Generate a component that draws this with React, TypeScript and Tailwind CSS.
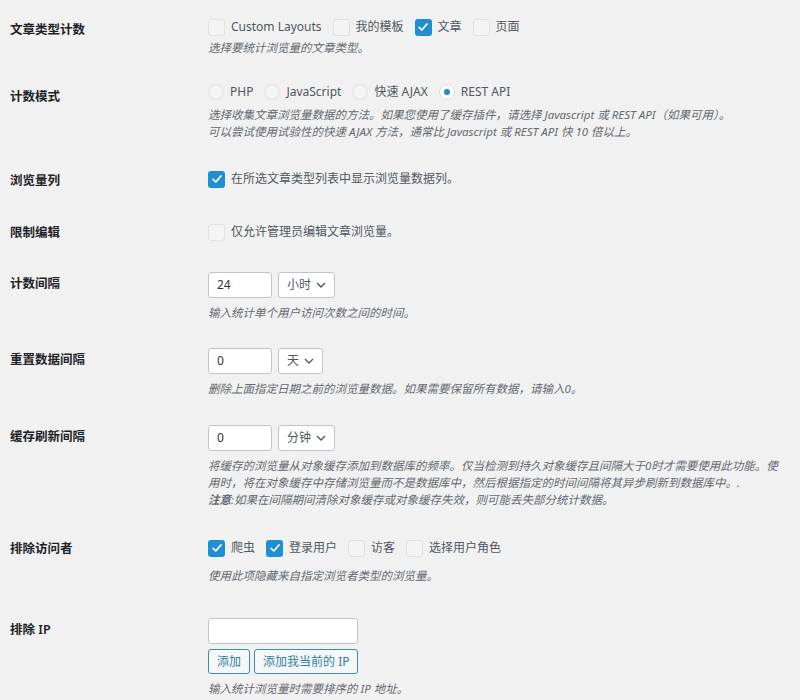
import type { ReactNode } from 'react';

function CheckBox({ checked }: { checked?: boolean }) {
  if (checked) {
    return (
      <span className="flex h-[17px] w-[17px] shrink-0 items-center justify-center rounded-[3px] bg-[#1f8fd3]">
        <svg viewBox="0 0 20 20" className="h-[14px] w-[14px]">
          <path d="M4.5 10.5l3.8 3.8L15.8 5.5" fill="none" stroke="#fff" strokeWidth="2.4" strokeLinecap="round" strokeLinejoin="round" />
        </svg>
      </span>
    );
  }
  return <span className="h-[17px] w-[17px] shrink-0 rounded-[3px] border border-[#e1e1e1] bg-[#f4f4f4]" />;
}

function Radio({ checked }: { checked?: boolean }) {
  return (
    <span
      className={
        checked
          ? 'flex h-[16px] w-[16px] shrink-0 items-center justify-center rounded-full border border-[#dcdcde] bg-white'
          : 'h-[16px] w-[16px] shrink-0 rounded-full border border-[#e3e3e3] bg-[#f4f4f4]'
      }
    >
      {checked && <span className="h-[6px] w-[6px] rounded-full bg-[#1e8cbe]" />}
    </span>
  );
}

function Option({ children, checked, radio }: { children: ReactNode; checked?: boolean; radio?: boolean }) {
  return (
    <span className="mr-[11px] flex items-center gap-[6px]">
      {radio ? <Radio checked={checked} /> : <CheckBox checked={checked} />}
      <span>{children}</span>
    </span>
  );
}

function Select({ value }: { value: string }) {
  return (
    <span className="ml-[6px] flex h-[26px] items-center gap-[5px] rounded-[3px] border border-[#c3c4c7] bg-white pl-[8px] pr-[8px] text-[#50575e]">
      {value}
      <svg viewBox="0 0 10 6" className="h-[6px] w-[10px]">
        <path d="M1 1l4 4 4-4" fill="none" stroke="#50575e" strokeWidth="1.4" />
      </svg>
    </span>
  );
}

function NumberInput({ value }: { value: string }) {
  return (
    <span className="flex h-[26px] w-[64px] items-center rounded-[3px] border border-[#c3c4c7] bg-white px-[8px] text-[#2c3338]">
      {value}
    </span>
  );
}

function Desc({ children, className = '' }: { children: ReactNode; className?: string }) {
  return <p className={`text-[11.5px] leading-[17px] text-[#646970] italic ${className}`}>{children}</p>;
}

function Row({ label, labelPad, rowPad, children }: { label: string; labelPad: string; rowPad: string; children: ReactNode }) {
  return (
    <div className={`flex ${rowPad}`}>
      <div className={`w-[198px] shrink-0 text-[12.5px] leading-[20px] font-semibold text-[#1d2327] ${labelPad}`}>{label}</div>
      <div className="flex-1">{children}</div>
    </div>
  );
}

export default function App() {
  return (
    <div className="min-h-[700px] bg-[#f1f1f1] pl-[10px] font-['Noto_Sans','Noto_Sans_CJK_SC',sans-serif] text-[12px] text-[#50575e]">
      <Row label="文章类型计数" rowPad="pt-[17px]" labelPad="pt-[3px]">
        <div className="flex h-[20px] items-center">
          <Option>Custom Layouts</Option>
          <Option>我的模板</Option>
          <Option checked>文章</Option>
          <Option>页面</Option>
        </div>
        <Desc className="mt-[2px]">选择要统计浏览量的文章类型。</Desc>
      </Row>

      <Row label="计数模式" rowPad="pt-[26px]" labelPad="pt-[5px]">
        <div className="flex h-[20px] items-center">
          <Option radio>PHP</Option>
          <Option radio>JavaScript</Option>
          <Option radio>快速 AJAX</Option>
          <Option radio checked>REST API</Option>
        </div>
        <Desc className="mt-[4px]">
          选择收集文章浏览量数据的方法。如果您使用了缓存插件，请选择 Javascript 或 REST API（如果可用）。
          <br />
          可以尝试使用试验性的快速 AJAX 方法，通常比 Javascript 或 REST API 快 10 倍以上。
        </Desc>
      </Row>

      <Row label="浏览量列" rowPad="pt-[29px]" labelPad="pt-[2px]">
        <div className="flex h-[20px] items-center">
          <Option checked>在所选文章类型列表中显示浏览量数据列。</Option>
        </div>
      </Row>

      <Row label="限制编辑" rowPad="pt-[31px]" labelPad="pt-[1px]">
        <div className="flex h-[20px] items-center">
          <Option>仅允许管理员编辑文章浏览量。</Option>
        </div>
      </Row>

      <Row label="计数间隔" rowPad="pt-[29px]" labelPad="pt-[2px]">
        <div className="flex items-center">
          <NumberInput value="24" />
          <Select value="小时" />
        </div>
        <Desc className="mt-[6px]">输入统计单个用户访问次数之间的时间。</Desc>
      </Row>

      <Row label="重置数据间隔" rowPad="pt-[27px]" labelPad="pt-[2px]">
        <div className="flex items-center">
          <NumberInput value="0" />
          <Select value="天" />
        </div>
        <Desc className="mt-[6px]">删除上面指定日期之前的浏览量数据。如果需要保留所有数据，请输入0。</Desc>
      </Row>

      <Row label="缓存刷新间隔" rowPad="pt-[28px]" labelPad="pt-[2px]">
        <div className="flex items-center">
          <NumberInput value="0" />
          <Select value="分钟" />
        </div>
        <Desc className="mt-[6px]">
          将缓存的浏览量从对象缓存添加到数据库的频率。仅当检测到持久对象缓存且间隔大于0时才需要使用此功能。使
          <br />
          用时，将在对象缓存中存储浏览量而不是数据库中，然后根据指定的时间间隔将其异步刷新到数据库中。.
          <br />
          <strong className="font-bold">注意</strong>:如果在间隔期间清除对象缓存或对象缓存失效，则可能丢失部分统计数据。
        </Desc>
      </Row>

      <Row label="排除访问者" rowPad="pt-[30px]" labelPad="pt-[1px]">
        <div className="flex h-[20px] items-center">
          <Option checked>爬虫</Option>
          <Option checked>登录用户</Option>
          <Option>访客</Option>
          <Option>选择用户角色</Option>
        </div>
        <Desc className="mt-[9px]">使用此项隐藏来自指定浏览者类型的浏览量。</Desc>
      </Row>

      <Row label="排除 IP" rowPad="pt-[34px]" labelPad="pt-[2px]">
        <span className="block h-[26px] w-[150px] rounded-[3px] border border-[#c3c4c7] bg-white" />
        <div className="mt-[5px] flex gap-[4px]">
          <button className="h-[25px] rounded-[3px] border border-[#3f8bb0] bg-[#f6f7f7] px-[8px] text-[#2f7fa8]">添加</button>
          <button className="h-[25px] rounded-[3px] border border-[#3f8bb0] bg-[#f6f7f7] px-[8px] text-[#2f7fa8]">添加我当前的 IP</button>
        </div>
        <Desc className="mt-[6px]">输入统计浏览量时需要排序的 IP 地址。</Desc>
      </Row>
    </div>
  );
}
